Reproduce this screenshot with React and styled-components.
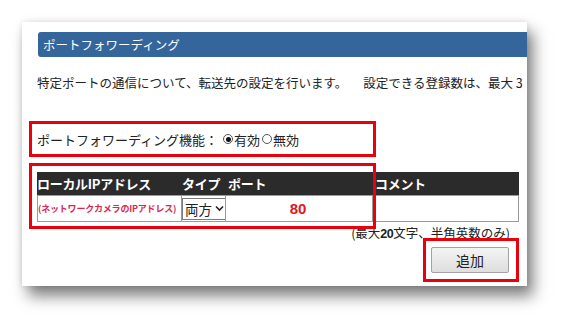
import React from "react";
import styled, { createGlobalStyle } from "styled-components";

const GlobalStyle = createGlobalStyle`
  html, body {
    margin: 0;
    padding: 0;
    background: #ffffff;
  }
  body {
    font-family: "Noto Sans CJK JP", "Noto Sans", sans-serif;
    color: #222;
  }
`;

const Page = styled.div`
  width: 570px;
  height: 329px;
  padding: 22px 0 0 22px;
  box-sizing: border-box;
`;

const Card = styled.div`
  width: 505px;
  height: 264px;
  background: #fff;
  overflow: hidden;
  box-shadow: 6px 10px 14px rgba(0, 0, 0, 0.5), 0 0 6px rgba(0, 0, 0, 0.12);
  display: flex;
  flex-direction: column;
`;

const TitleBar = styled.div`
  margin: 10px 0 0 16px;
  width: 520px;
  height: 25px;
  flex-shrink: 0;
  background: #35669b;
  border-radius: 3px 0 0 3px;
  color: #fff;
  font-size: 12.5px;
  line-height: 25px;
  padding-left: 5px;
  box-sizing: border-box;
`;

const Lead = styled.p`
  margin: 18px 0 0 15px;
  font-size: 12.5px;
  line-height: 16px;
  white-space: nowrap;
  color: #222;
`;

const Gap = styled.span`
  display: inline-block;
  width: 16px;
`;

const MarkBox = styled.div`
  border: 3px solid #e8000b;
  box-sizing: border-box;
`;

const FeatureRow = styled(MarkBox)`
  margin: 30px 0 0 7px;
  width: 347px;
  height: 36px;
  display: flex;
  align-items: center;
  padding-left: 5px;
  font-size: 13px;
  white-space: nowrap;
`;

const Option = styled.span`
  display: inline-flex;
  align-items: center;
  gap: 1px;
  margin-left: ${(p) => (p.$first ? "5px" : "2px")};
`;

const Radio = styled.span`
  width: 10px;
  height: 10px;
  border-radius: 50%;
  border: 1px solid #555;
  display: inline-flex;
  align-items: center;
  justify-content: center;
  box-sizing: border-box;
  &::after {
    content: "";
    width: 5px;
    height: 5px;
    border-radius: 50%;
    background: ${(p) => (p.$checked ? "#111" : "transparent")};
  }
`;

const TableArea = styled.div`
  position: relative;
  margin: 15px 0 0 15px;
  width: 482px;
`;

const Grid = styled.div`
  display: grid;
  grid-template-columns: 145px 44px 147px 146px;
`;

const HeadCell = styled.div`
  height: 23px;
  background: #2b2b2b;
  color: #fff;
  font-weight: bold;
  font-size: 13px;
  letter-spacing: -0.3px;
  line-height: 23px;
  padding-left: ${(p) => p.$pad || "0px"};
  white-space: nowrap;
`;

const Cell = styled.div`
  height: 27px;
  box-sizing: border-box;
  border: 1px solid #9a9a9a;
  border-left-width: ${(p) => (p.$first ? "1px" : "0")};
  background: #fff;
  display: flex;
  align-items: center;
  justify-content: ${(p) => (p.$center ? "center" : "flex-start")};
  overflow: hidden;
`;

const HintText = styled.span`
  color: #d9264f;
  font-size: 9px;
  font-weight: bold;
  white-space: nowrap;
  letter-spacing: -0.2px;
`;

const SelectBox = styled.div`
  height: 22px;
  width: 44px;
  flex-shrink: 0;
  box-sizing: border-box;
  border: 1px solid #7a7a7a;
  background: #fff;
  display: flex;
  align-items: center;
  gap: 3px;
  padding: 0 0 0 2px;
  font-size: 13.5px;
  line-height: 20px;
  white-space: nowrap;
  color: #222;
  svg {
    flex-shrink: 0;
  }
`;

const PortValue = styled.span`
  font-family: "Liberation Sans", Arial, sans-serif;
  font-weight: bold;
  font-size: 15px;
  color: #e0161b;
  margin-left: -2px;
`;

const Overlay = styled(MarkBox)`
  position: absolute;
  left: -8px;
  top: -9px;
  width: 347px;
  height: 66px;
  pointer-events: none;
`;

const Note = styled.div`
  margin-top: 5px;
  padding-right: 17px;
  text-align: right;
  font-size: 12.5px;
  line-height: 12px;
  height: 12px;
  white-space: nowrap;
  color: #222;
`;

const Digits = styled.span`
  font-family: "Liberation Sans", Arial, sans-serif;
  font-weight: bold;
  letter-spacing: -0.5px;
`;

const Actions = styled.div`
  display: flex;
  justify-content: flex-end;
  padding-right: 8px;
  margin-top: -1px;
`;

const ButtonFrame = styled(MarkBox)`
  width: 96px;
  height: 44px;
  padding: 6px 0 0 5px;
`;

const Button = styled.button`
  width: 78px;
  height: 26px;
  border: 1px solid #a3a3a3;
  border-radius: 2px;
  background: linear-gradient(#f4f4f4, #dedede);
  font-family: "Noto Sans CJK JP", sans-serif;
  font-size: 14px;
  color: #222;
  padding: 0;
`;

export default function App() {
  return (
    <>
      <GlobalStyle />
      <Page>
        <Card>
          <TitleBar>ポートフォワーディング</TitleBar>
          <Lead>
            特定ポートの通信について、転送先の設定を行います。
            <Gap />
            設定できる登録数は、最大 3
          </Lead>
          <FeatureRow>
            ポートフォワーディング機能：
            <Option $first>
              <Radio $checked />
              有効
            </Option>
            <Option>
              <Radio />
              無効
            </Option>
          </FeatureRow>
          <TableArea>
            <Grid>
              <HeadCell>ローカルIPアドレス</HeadCell>
              <HeadCell>タイプ</HeadCell>
              <HeadCell $pad="2px">ポート</HeadCell>
              <HeadCell $pad="2px">コメント</HeadCell>
              <Cell $first>
                <HintText>(ネットワークカメラのIPアドレス)</HintText>
              </Cell>
              <Cell>
                <SelectBox>
                  <span>両方</span>
                  <svg width="9" height="7" viewBox="0 0 9 7">
                    <polyline points="1,1.5 4.5,5 8,1.5" fill="none" stroke="#222" strokeWidth="1.6" />
                  </svg>
                </SelectBox>
              </Cell>
              <Cell $center>
                <PortValue>80</PortValue>
              </Cell>
              <Cell />
            </Grid>
            <Overlay />
          </TableArea>
          <Note>
            (最大<Digits>20</Digits>文字、半角英数のみ)
          </Note>
          <Actions>
            <ButtonFrame>
              <Button>追加</Button>
            </ButtonFrame>
          </Actions>
        </Card>
      </Page>
    </>
  );
}
